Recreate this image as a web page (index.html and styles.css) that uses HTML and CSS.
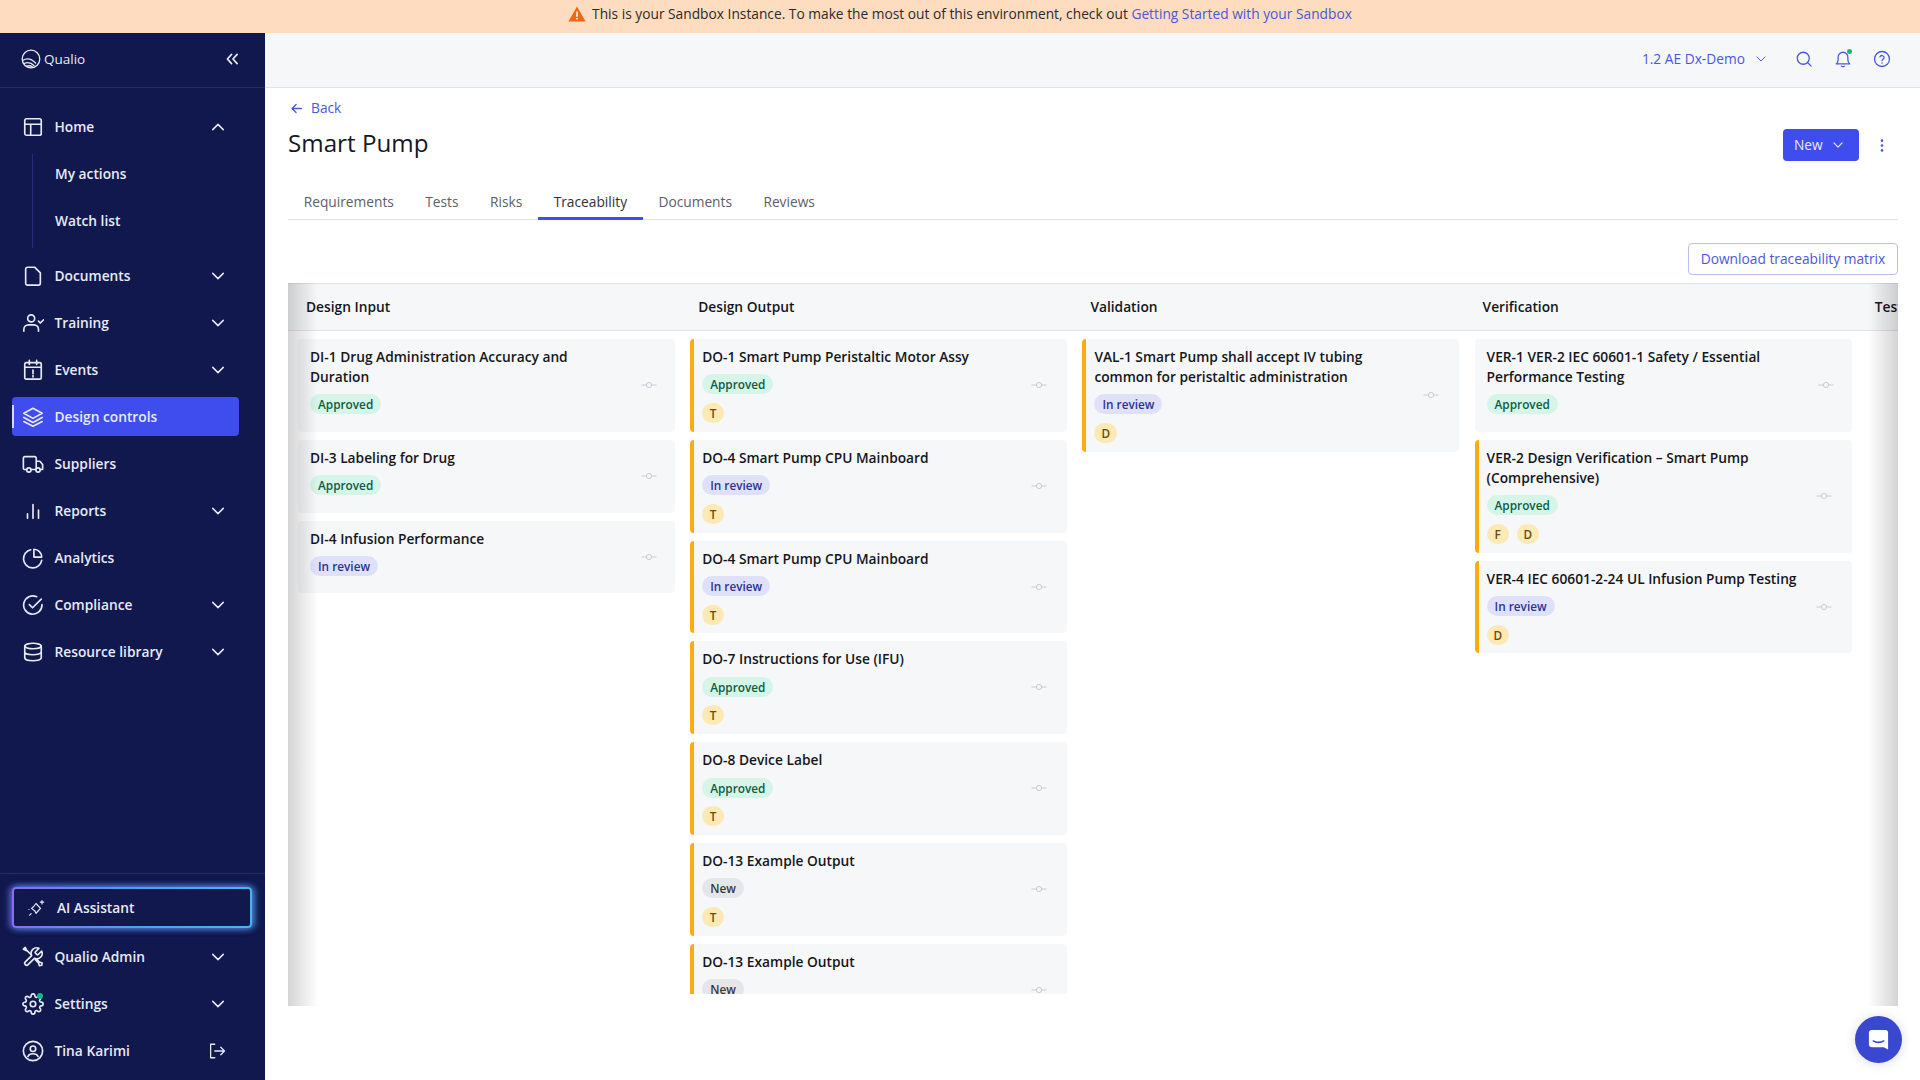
FILE: index.html
```html
<!DOCTYPE html>
<html lang="en">
<head>
    <meta charset="UTF-8">
    <title>Smart Pump - Traceability</title>
    <link rel="stylesheet" href="styles.css">
</head>
<body>
    <svg class="sprites" aria-hidden="true">
        <symbol id="chev-down" viewBox="0 0 24 24"><path d="M5 8.5l7 7 7-7"/></symbol>
        <symbol id="chev-up" viewBox="0 0 24 24"><path d="M5 15.5l7-7 7 7"/></symbol>
        <symbol id="link" viewBox="0 0 16 16"><circle cx="8" cy="8" r="2.6"/><path d="M0.5 8h4.9M10.6 8h4.9"/></symbol>
    </svg>

    <div class="banner">
        <svg class="banner-icon" viewBox="0 0 18 16"><path d="M9 0.6L17.6 15.6H0.4z" fill="#ee6a12"/><path d="M9 5.5v5.2M9 12v1.6" stroke="#fff" stroke-width="1.5"/></svg>
        <span>This is your Sandbox Instance. To make the most out of this environment, check out <a href="#">Getting Started with your Sandbox</a></span>
    </div>

    <div class="app">
        <!-- Sidebar -->
        <aside class="sidebar">
            <div class="brand">
                <svg class="logo" viewBox="0 0 20 20"><circle cx="10" cy="10" r="8.8"/><path d="M1.6 11.5c4-2.6 9-1.6 13 2.5M3 14.5c3.500-1.600 7-1 10 2M5.500 17.200c2.500-.8 4.500-.5 6 .8"/></svg>
                <span class="brand-name">Qualio</span>
                <svg class="collapse" viewBox="0 0 14 12"><path d="M6 1L1.500 6 6 11M12 1L7.500 6 12 11"/></svg>
            </div>

            <nav class="nav">
                <a class="nav-item" href="#">
                    <svg class="nav-icon" viewBox="0 0 24 24"><rect x="3" y="3" width="18" height="18" rx="2"/><path d="M3 9h18M9.500 9v12"/></svg>
                    <span class="nav-label">Home</span>
                    <svg class="chev"><use href="#chev-up"/></svg>
                </a>
                <div class="subnav">
                    <a class="nav-item" href="#"><span class="nav-label">My actions</span></a>
                    <a class="nav-item" href="#"><span class="nav-label">Watch list</span></a>
                </div>
                <a class="nav-item" href="#">
                    <svg class="nav-icon" viewBox="0 0 24 24"><path d="M6 2.500h8l6 6V20a2 2 0 0 1-2 2H6a2 2 0 0 1-2-2V4.500a2 2 0 0 1 2-2z"/></svg>
                    <span class="nav-label">Documents</span>
                    <svg class="chev"><use href="#chev-down"/></svg>
                </a>
                <a class="nav-item" href="#">
                    <svg class="nav-icon" viewBox="0 0 24 24"><circle cx="10" cy="7" r="3.800"/><path d="M2 21v-2a5 5 0 0 1 5-5h6a5 5 0 0 1 5 5v2M18 10l2 2 3.500-3.500"/></svg>
                    <span class="nav-label">Training</span>
                    <svg class="chev"><use href="#chev-down"/></svg>
                </a>
                <a class="nav-item" href="#">
                    <svg class="nav-icon" viewBox="0 0 24 24"><rect x="3" y="4" width="18" height="18" rx="1.500"/><path d="M3 9h18M8 1.500V6M16 1.500V6M12 12v4M12 18v1.500"/></svg>
                    <span class="nav-label">Events</span>
                    <svg class="chev"><use href="#chev-down"/></svg>
                </a>
                <a class="nav-item active" href="#">
                    <svg class="nav-icon" viewBox="0 0 24 24"><path d="M12 2.500L22 8l-10 5.500L2 8zM2 12.500l10 5.500 10-5.500M2 17l10 5 10-5"/></svg>
                    <span class="nav-label">Design controls</span>
                </a>
                <a class="nav-item" href="#">
                    <svg class="nav-icon" viewBox="0 0 24 24"><path d="M5 18H3a1.500 1.500 0 0 1-1.500-1.500v-11A1.500 1.500 0 0 1 3 4h11a1.500 1.500 0 0 1 1.500 1.500V18H10M15.500 9h4l3 3.500V18h-2.500"/><circle cx="7.500" cy="18.500" r="2.300"/><circle cx="17.500" cy="18.500" r="2.300"/></svg>
                    <span class="nav-label">Suppliers</span>
                </a>
                <a class="nav-item" href="#">
                    <svg class="nav-icon" viewBox="0 0 24 24"><path d="M6 20v-5M12 20V5M18 20v-9"/></svg>
                    <span class="nav-label">Reports</span>
                    <svg class="chev"><use href="#chev-down"/></svg>
                </a>
                <a class="nav-item" href="#">
                    <svg class="nav-icon" viewBox="0 0 24 24"><path d="M21.500 14.500A10 10 0 1 1 9.500 3M13 2.500a8.500 8.500 0 0 1 8.500 8.500H13z"/></svg>
                    <span class="nav-label">Analytics</span>
                </a>
                <a class="nav-item" href="#">
                    <svg class="nav-icon" viewBox="0 0 24 24"><path d="M21.800 11.500V12A10 10 0 1 1 16 3M8 11.500l3.500 3.500L21 5.500"/></svg>
                    <span class="nav-label">Compliance</span>
                    <svg class="chev"><use href="#chev-down"/></svg>
                </a>
                <a class="nav-item" href="#">
                    <svg class="nav-icon" viewBox="0 0 24 24"><ellipse cx="12" cy="5.500" rx="9" ry="3"/><path d="M3 5.500v13c0 1.700 4 3 9 3s9-1.300 9-3v-13M3 12c0 1.700 4 3 9 3s9-1.300 9-3"/></svg>
                    <span class="nav-label">Resource library</span>
                    <svg class="chev"><use href="#chev-down"/></svg>
                </a>
            </nav>

            <div class="sidebar-foot">
                <a class="ai-button" href="#">
                    <svg class="ai-icon" viewBox="0 0 24 24"><path d="M12 6l6 6.500-6 6.500-1.500-3-4.500-3.500 3-2.500zM3.500 21.500l2-2M20 2v4.500M17.800 4.200h4.400M2.500 14h.1"/></svg>
                    <span>AI Assistant</span>
                </a>
                <a class="nav-item" href="#">
                    <svg class="nav-icon" viewBox="0 0 24 24"><path d="M14.700 6.300a1 1 0 0 0 0 1.400l1.600 1.600a1 1 0 0 0 1.400 0l3.770-3.770a6 6 0 0 1-7.940 7.940l-6.910 6.910a2.120 2.120 0 0 1-3-3l6.910-6.910a6 6 0 0 1 7.940-7.940l-3.760 3.760z"/><path d="M9.500 9L5 4.500 3.500 1.500 1.500 3.500 4.500 5M14.500 15l3.500 3.500 1 3 2.500-.5.500-2.500-3-1-3.500-3.500"/></svg>
                    <span class="nav-label">Qualio Admin</span>
                    <svg class="chev"><use href="#chev-down"/></svg>
                </a>
                <a class="nav-item" href="#">
                    <span class="icon-wrap">
                        <svg class="nav-icon" viewBox="0 0 24 24"><path d="M12 15a3 3 0 1 0 0-6 3 3 0 0 0 0 6z"/><path d="M19.400 15a1.650 1.650 0 0 0 .33 1.820l.06.06a2 2 0 0 1 0 2.830 2 2 0 0 1-2.830 0l-.06-.06a1.650 1.650 0 0 0-1.820-.33 1.650 1.650 0 0 0-1 1.510V21a2 2 0 0 1-2 2 2 2 0 0 1-2-2v-.09A1.650 1.650 0 0 0 9 19.400a1.650 1.650 0 0 0-1.820.33l-.06.06a2 2 0 0 1-2.830 0 2 2 0 0 1 0-2.830l.06-.06a1.650 1.650 0 0 0 .33-1.820 1.650 1.650 0 0 0-1.510-1H3a2 2 0 0 1-2-2 2 2 0 0 1 2-2h.09A1.650 1.650 0 0 0 4.600 9a1.650 1.650 0 0 0-.33-1.820l-.06-.06a2 2 0 0 1 0-2.830 2 2 0 0 1 2.830 0l.06.06a1.650 1.650 0 0 0 1.820.33H9a1.650 1.650 0 0 0 1-1.510V3a2 2 0 0 1 2-2 2 2 0 0 1 2 2v.09a1.650 1.650 0 0 0 1 1.510 1.650 1.650 0 0 0 1.820-.33l.06-.06a2 2 0 0 1 2.830 0 2 2 0 0 1 0 2.830l-.06.06a1.650 1.650 0 0 0-.33 1.820V9a1.650 1.650 0 0 0 1.510 1H21a2 2 0 0 1 2 2 2 2 0 0 1-2 2h-.09a1.650 1.650 0 0 0-1.510 1z"/></svg>
                        <i class="dot"></i>
                    </span>
                    <span class="nav-label">Settings</span>
                    <svg class="chev"><use href="#chev-down"/></svg>
                </a>
                <a class="nav-item" href="#">
                    <svg class="nav-icon" viewBox="0 0 24 24"><circle cx="12" cy="12" r="10.500"/><circle cx="12" cy="9.500" r="3"/><path d="M6.500 18c.8-2 2.500-3 5.500-3s4.700 1 5.500 3"/></svg>
                    <span class="nav-label">Tina Karimi</span>
                    <svg class="logout" viewBox="0 0 24 24"><path d="M9 3H3.500v18H9M9 12h13M17 7l5 5-5 5"/></svg>
                </a>
            </div>
        </aside>

        <!-- Main content -->
        <main class="main">
            <div class="topbar">
                <span class="project">1.2 AE Dx-Demo</span>
                <svg class="top-chev"><use href="#chev-down"/></svg>
                <svg class="top-icon first" viewBox="0 0 24 24"><circle cx="11" cy="11" r="8"/><path d="M17 17l4.500 4.500"/></svg>
                <span class="bell-wrap">
                    <svg class="top-icon" viewBox="0 0 24 24"><path d="M12 3a6.500 6.500 0 0 0-6.500 6.500V13c0 2.500-.8 4-2.500 5.500h18c-1.700-1.500-2.500-3-2.500-5.500V9.500A6.500 6.500 0 0 0 12 3zM10 21.500c1 .8 3 .8 4 0"/></svg>
                    <i class="dot"></i>
                </span>
                <svg class="top-icon" viewBox="0 0 24 24"><circle cx="12" cy="12" r="10"/><path d="M9.200 9.200a2.900 2.900 0 0 1 5.600 1c0 1.900-2.800 2.300-2.800 4M12 17.200v.3"/></svg>
            </div>

            <div class="content">
                <a class="back" href="#">
                    <svg viewBox="0 0 16 16"><path d="M14 8H2.500M7.500 3L2.500 8l5 5"/></svg>
                    <span>Back</span>
                </a>

                <div class="title-row">
                    <h1>Smart Pump</h1>
                    <button class="btn-new">New <svg><use href="#chev-down"/></svg></button>
                    <svg class="kebab" viewBox="0 0 4 16"><circle cx="2" cy="2" r="1.600"/><circle cx="2" cy="8" r="1.600"/><circle cx="2" cy="14" r="1.600"/></svg>
                </div>

                <div class="tabs">
                    <a class="tab" href="#">Requirements</a>
                    <a class="tab" href="#">Tests</a>
                    <a class="tab" href="#">Risks</a>
                    <a class="tab active" href="#">Traceability</a>
                    <a class="tab" href="#">Documents</a>
                    <a class="tab" href="#">Reviews</a>
                </div>

                <div class="actions">
                    <button class="btn-outline">Download traceability matrix</button>
                </div>

                <div class="board">
                    <div class="board-head">
                        <div class="col-title">Design Input</div>
                        <div class="col-title">Design Output</div>
                        <div class="col-title">Validation</div>
                        <div class="col-title">Verification</div>
                        <div class="col-title">Tests</div>
                    </div>
                    <div class="board-body">
                        <div class="col">
                            <div class="card">
                                <div class="card-text">
                                    <div class="card-title">DI-1 Drug Administration Accuracy and Duration</div>
                                    <span class="badge approved">Approved</span>
                                </div>
                                <svg class="link-icon"><use href="#link"/></svg>
                            </div>
                            <div class="card">
                                <div class="card-text">
                                    <div class="card-title">DI-3 Labeling for Drug</div>
                                    <span class="badge approved">Approved</span>
                                </div>
                                <svg class="link-icon"><use href="#link"/></svg>
                            </div>
                            <div class="card">
                                <div class="card-text">
                                    <div class="card-title">DI-4 Infusion Performance</div>
                                    <span class="badge review">In review</span>
                                </div>
                                <svg class="link-icon"><use href="#link"/></svg>
                            </div>
                        </div>

                        <div class="col">
                            <div class="card flagged">
                                <div class="card-text">
                                    <div class="card-title">DO-1 Smart Pump Peristaltic Motor Assy</div>
                                    <span class="badge approved">Approved</span>
                                    <div class="refs"><span class="ref">T</span></div>
                                </div>
                                <svg class="link-icon"><use href="#link"/></svg>
                            </div>
                            <div class="card flagged">
                                <div class="card-text">
                                    <div class="card-title">DO-4 Smart Pump CPU Mainboard</div>
                                    <span class="badge review">In review</span>
                                    <div class="refs"><span class="ref">T</span></div>
                                </div>
                                <svg class="link-icon"><use href="#link"/></svg>
                            </div>
                            <div class="card flagged">
                                <div class="card-text">
                                    <div class="card-title">DO-4 Smart Pump CPU Mainboard</div>
                                    <span class="badge review">In review</span>
                                    <div class="refs"><span class="ref">T</span></div>
                                </div>
                                <svg class="link-icon"><use href="#link"/></svg>
                            </div>
                            <div class="card flagged">
                                <div class="card-text">
                                    <div class="card-title">DO-7 Instructions for Use (IFU)</div>
                                    <span class="badge approved">Approved</span>
                                    <div class="refs"><span class="ref">T</span></div>
                                </div>
                                <svg class="link-icon"><use href="#link"/></svg>
                            </div>
                            <div class="card flagged">
                                <div class="card-text">
                                    <div class="card-title">DO-8 Device Label</div>
                                    <span class="badge approved">Approved</span>
                                    <div class="refs"><span class="ref">T</span></div>
                                </div>
                                <svg class="link-icon"><use href="#link"/></svg>
                            </div>
                            <div class="card flagged">
                                <div class="card-text">
                                    <div class="card-title">DO-13 Example Output</div>
                                    <span class="badge new">New</span>
                                    <div class="refs"><span class="ref">T</span></div>
                                </div>
                                <svg class="link-icon"><use href="#link"/></svg>
                            </div>
                            <div class="card flagged">
                                <div class="card-text">
                                    <div class="card-title">DO-13 Example Output</div>
                                    <span class="badge new">New</span>
                                    <div class="refs"><span class="ref">T</span></div>
                                </div>
                                <svg class="link-icon"><use href="#link"/></svg>
                            </div>
                        </div>

                        <div class="col">
                            <div class="card flagged">
                                <div class="card-text">
                                    <div class="card-title">VAL-1 Smart Pump shall accept IV tubing common for peristaltic administration</div>
                                    <span class="badge review">In review</span>
                                    <div class="refs"><span class="ref">D</span></div>
                                </div>
                                <svg class="link-icon"><use href="#link"/></svg>
                            </div>
                        </div>

                        <div class="col">
                            <div class="card">
                                <div class="card-text">
                                    <div class="card-title">VER-1 VER-2 IEC 60601-1 Safety / Essential Performance Testing</div>
                                    <span class="badge approved">Approved</span>
                                </div>
                                <svg class="link-icon"><use href="#link"/></svg>
                            </div>
                            <div class="card flagged">
                                <div class="card-text">
                                    <div class="card-title">VER-2 Design Verification – Smart Pump (Comprehensive)</div>
                                    <span class="badge approved">Approved</span>
                                    <div class="refs"><span class="ref">F</span><span class="ref">D</span></div>
                                </div>
                                <svg class="link-icon"><use href="#link"/></svg>
                            </div>
                            <div class="card flagged">
                                <div class="card-text">
                                    <div class="card-title">VER-4 IEC 60601-2-24 UL Infusion Pump Testing</div>
                                    <span class="badge review">In review</span>
                                    <div class="refs"><span class="ref">D</span></div>
                                </div>
                                <svg class="link-icon"><use href="#link"/></svg>
                            </div>
                        </div>
                    </div>
                    <div class="shade shade-left"></div>
                    <div class="shade shade-right"></div>
                </div>
            </div>

            <button class="chat">
                <svg viewBox="0 0 24 24"><path d="M5 2h14a3 3 0 0 1 3 3v17.500L17.500 20H5a3 3 0 0 1-3-3V5a3 3 0 0 1 3-3z" fill="#fff"/><path d="M6.500 13.500c3 2 8 2 11 0" fill="none" stroke="#3a47cf" stroke-width="1.600" stroke-linecap="round"/></svg>
            </button>
        </main>
    </div>
</body>
</html>
```

FILE: styles.css
```css
:root {
    --navy: #11184d;
    --blue: #3f4cee;
    --link: #4b57dc;
    --panel: #f6f7f9;
    --border-color: #e1e3e8;
    --text: #14161b;
}

* {
    box-sizing: border-box;
}

html, body {
    height: 100%;
}

body {
    margin: 0;
    font-family: "Open Sans", "Noto Sans", sans-serif;
    font-size: 13.75px;
    line-height: 20px;
    color: var(--text);
    background-color: #fff;
    overflow: hidden;
    display: flex;
    flex-direction: column;
}

a {
    text-decoration: none;
    color: inherit;
}

svg {
    display: block;
    flex: none;
}

.sprites {
    display: none;
}

.banner {
    height: 33px;
    flex: none;
    display: flex;
    align-items: center;
    justify-content: center;
    gap: 6px;
    background-color: #fedcc0;
    color: #2b2a28;
    padding-bottom: 5px;
}

.banner a {
    color: var(--link);
}

.banner-icon {
    width: 18px;
    height: 16px;
}

.app {
    flex: 1;
    display: flex;
    min-height: 0;
}

/* Sidebar */
.sidebar {
    width: 265px;
    flex: none;
    background-color: var(--navy);
    color: #e8eaf6;
    display: flex;
    flex-direction: column;
    font-weight: 600;
}

.sidebar svg {
    fill: none;
    stroke: #e8eaf6;
    stroke-width: 1.8;
    stroke-linecap: round;
    stroke-linejoin: round;
}

.brand {
    height: 55px;
    flex: none;
    display: flex;
    align-items: center;
    padding: 0 26px 2px 21px;
    border-bottom: 1px solid #262c5e;
}

.sidebar .logo {
    width: 20px;
    height: 20px;
    stroke-width: 1.300;
}

.brand-name {
    margin-left: 3px;
    font-weight: 400;
    font-size: 13.500px;
    flex: 1;
}

.sidebar .collapse {
    width: 13px;
    height: 12px;
}

.nav {
    flex: 1;
    padding-top: 19px;
}

.nav-item {
    display: flex;
    align-items: center;
    gap: 10.500px;
    width: 227px;
    height: 39px;
    margin: 0 0 8px 12px;
    padding: 0 12px 0 10px;
    border-radius: 4px;
    position: relative;
}

.nav-label {
    flex: 1;
}

.nav-icon {
    width: 22px;
    height: 22px;
}

.sidebar .chev {
    width: 18px;
    height: 18px;
    stroke-width: 2;
}

.subnav {
    margin-left: 32px;
    margin-bottom: 8px;
    width: 207px;
    height: 94px;
    border-left: 1px solid #222d78;
}

.subnav .nav-item {
    margin-left: -20px;
    padding-left: 42px;
}

.nav-item.active {
    background-color: var(--blue);
}

.nav-item.active::before {
    content: "";
    position: absolute;
    left: 0;
    top: 8px;
    bottom: 8px;
    width: 2px;
    background-color: #d6d9fa;
}

.sidebar-foot {
    border-top: 1px solid #262c5e;
    padding-top: 13px;
    flex: none;
}

.sidebar-foot .nav-item:last-child {
    margin-bottom: 10px;
}

.ai-button {
    display: flex;
    align-items: center;
    gap: 12px;
    width: 240px;
    height: 41px;
    margin: 0 0 9px 12px;
    padding-left: 13px;
    border: 2px solid transparent;
    border-radius: 4px;
    background:
        linear-gradient(var(--navy), var(--navy)) padding-box,
        linear-gradient(90deg, #8b6cf0, #4f9ef0 50%, #49b4f2) border-box;
    box-shadow: -3px 0 7px rgba(130, 100, 240, 0.5), 3px 0 7px rgba(75, 160, 240, 0.6), 0 0 7px rgba(75, 150, 240, 0.75);
}

.sidebar .ai-icon {
    width: 18px;
    height: 18px;
    stroke-width: 1.600;
}

.icon-wrap {
    position: relative;
    flex: none;
}

.dot {
    position: absolute;
    width: 6px;
    height: 6px;
    border-radius: 50%;
    background-color: #10b981;
    top: 0;
    right: 1px;
}

.sidebar .logout {
    width: 18px;
    height: 18px;
    stroke-width: 1.700;
    margin-right: 1px;
}

/* Main */
.main {
    flex: 1;
    min-width: 0;
    display: flex;
    flex-direction: column;
    position: relative;
}

.topbar {
    height: 55px;
    flex: none;
    display: flex;
    align-items: center;
    justify-content: flex-end;
    padding: 0 29px 2px 0;
    background-color: var(--panel);
    border-bottom: 1px solid var(--border-color);
    color: var(--link);
}

.topbar svg {
    fill: none;
    stroke: var(--link);
    stroke-width: 1.700;
    stroke-linecap: round;
    stroke-linejoin: round;
}

.top-chev {
    width: 14px;
    height: 14px;
    margin: 0 27px 0 9px;
    stroke-width: 2;
}

.top-icon {
    width: 18px;
    height: 18px;
    margin-left: 21px;
}

.top-icon.first {
    margin-left: 0;
}

.bell-wrap {
    position: relative;
    display: block;
}

.bell-wrap .dot {
    top: -1px;
    right: 0;
    width: 5px;
    height: 5px;
}

.content {
    flex: 1;
    min-height: 0;
    padding: 0 22px 0 23px;
}

.back {
    display: flex;
    align-items: center;
    gap: 8px;
    height: 20px;
    margin-top: 10px;
    padding-left: 2px;
    color: var(--link);
}

.back svg {
    width: 13px;
    height: 13px;
    fill: none;
    stroke: var(--link);
    stroke-width: 1.600;
    stroke-linecap: round;
    stroke-linejoin: round;
}

.title-row {
    display: flex;
    align-items: center;
    height: 36px;
    margin-top: 9px;
}

h1 {
    margin: 0 0 5px;
    flex: 1;
    font-size: 24.200px;
    line-height: 32px;
    font-weight: 500;
    color: #16181d;
}

.btn-new {
    display: flex;
    align-items: center;
    gap: 8px;
    width: 76px;
    height: 32px;
    padding: 0 0 0 11px;
    border: none;
    border-radius: 4px;
    background-color: var(--blue);
    color: #e9ebff;
    font: inherit;
}

.btn-new svg {
    width: 14px;
    height: 14px;
    fill: none;
    stroke: #e9ebff;
    stroke-width: 2;
    stroke-linecap: round;
    stroke-linejoin: round;
}

.kebab {
    width: 4px;
    height: 13px;
    margin: 0 14px 0 21px;
    fill: var(--link);
}

.tabs {
    display: flex;
    height: 41px;
    margin-top: 16px;
    padding-top: 13px;
    border-bottom: 1px solid var(--border-color);
}

.tab {
    padding: 0 15.700px;
    height: 28px;
    line-height: 20px;
    color: #5c6068;
}

.tab.active {
    color: #2e3138;
    border-bottom: 3px solid var(--blue);
}

.actions {
    display: flex;
    justify-content: flex-end;
    margin-top: 23px;
}

.btn-outline {
    width: 210px;
    height: 32px;
    padding: 0;
    border: 1px solid #b9bff0;
    border-radius: 4px;
    background-color: #fff;
    color: var(--link);
    font: inherit;
}

.board {
    margin-top: 8px;
    height: 723px;
    position: relative;
    overflow: hidden;
}

.board-head {
    height: 48px;
    display: flex;
    align-items: center;
    background-color: var(--panel);
    border-top: 1px solid var(--border-color);
    border-bottom: 1px solid var(--border-color);
    font-weight: 600;
    white-space: nowrap;
}

.col-title {
    width: 392.200px;
    flex: none;
    padding-left: 18px;
}

.board-body {
    height: 655px;
    margin-top: 8px;
    padding-left: 10px;
    display: flex;
    gap: 15.200px;
    align-items: flex-start;
    overflow: hidden;
}

.col {
    width: 377px;
    flex: none;
    display: flex;
    flex-direction: column;
    gap: 8px;
}

.card {
    display: flex;
    align-items: center;
    gap: 19px;
    padding: 8px 18px 8.800px 12px;
    border-radius: 4px;
    background-color: var(--panel);
}

.card.flagged {
    border-left: 4px solid #fdab0e;
    padding-left: 8px;
    padding-right: 20px;
    gap: 17px;
}

.card-text {
    flex: 1;
    min-width: 0;
}

.card-title {
    font-weight: 600;
    margin-bottom: 7.400px;
}

.badge {
    display: inline-block;
    vertical-align: top;
    height: 20px;
    padding: 0 8px;
    border-radius: 10px;
    font-size: 11.800px;
    line-height: 20px;
    font-weight: 600;
    margin-bottom: 8.600px;
}

.badge.approved {
    background-color: #d5f5e8;
    color: #0f5c44;
}

.badge.review {
    background-color: #dfe1fb;
    color: #2b348f;
}

.badge.new {
    background-color: #e5e6ea;
    color: #34373e;
}

.refs {
    display: flex;
    gap: 8px;
    height: 20px;
}

.ref {
    min-width: 22px;
    height: 20px;
    padding: 0 7px;
    border-radius: 10px;
    background-color: #fde9b4;
    color: #6b4a10;
    font-size: 11.800px;
    line-height: 20px;
    font-weight: 600;
    text-align: center;
}

.link-icon {
    width: 16px;
    height: 16px;
    fill: none;
    stroke: #c9ccd2;
    stroke-width: 1;
}

.shade {
    position: absolute;
    top: 0;
    bottom: 0;
    width: 30px;
    pointer-events: none;
}

.shade-left {
    left: 0;
    background: linear-gradient(90deg, rgba(0, 0, 0, 0.17), rgba(0, 0, 0, 0));
}

.shade-right {
    right: 0;
    background: linear-gradient(270deg, rgba(0, 0, 0, 0.17), rgba(0, 0, 0, 0));
}

.chat {
    position: absolute;
    right: 18px;
    bottom: 17px;
    width: 47px;
    height: 47px;
    padding: 12px;
    border: none;
    border-radius: 50%;
    background-color: #3a47cf;
    box-shadow: 0 1px 12px rgba(0, 0, 0, 0.14);
}

.chat svg {
    width: 23px;
    height: 23px;
}
```
